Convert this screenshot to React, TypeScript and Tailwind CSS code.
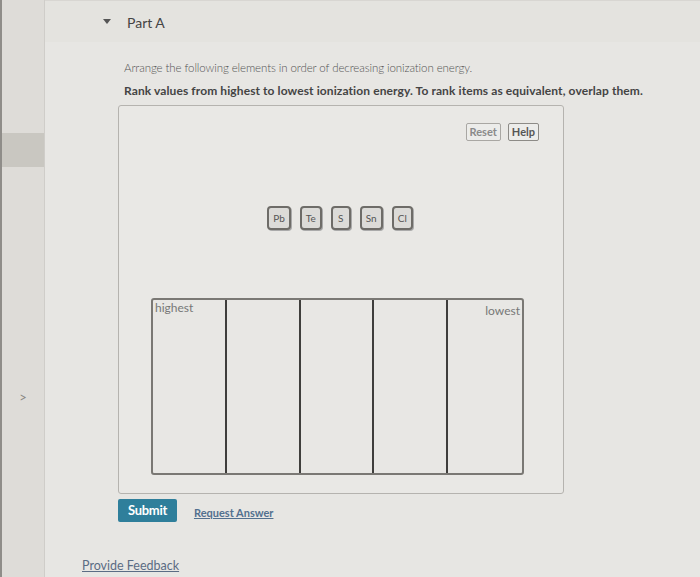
import React from "react";

const elements = ["Pb", "Te", "S", "Sn", "Cl"];

const App: React.FC = () => {
  return (
    <div
      className="flex h-[577px] w-[700px] overflow-hidden bg-[#e7e6e3] text-[#333]"
      style={{ fontFamily: "Lato, 'Open Sans', sans-serif" }}
    >
      {/* LEFT RAIL */}
      <aside className="flex w-[45px] shrink-0 flex-col border-r border-[#cfcdc9] bg-[#dedcd8] border-l-2 border-l-[#8f8d89]">
        <div className="h-[133px]" />
        <div className="h-[34px] bg-[#c9c7c1]" />
        <div className="flex flex-1 items-start justify-center pt-[221px] text-[13px] text-[#8a8883]">
          &gt;
        </div>
      </aside>

      {/* MAIN */}
      <main className="flex flex-1 flex-col">
        <header className="flex h-[42px] items-center gap-[16px] border-t border-[#d8d6d2] bg-[#e4e3df] pl-[58px] pt-[1px]">
          <svg width="8" height="6" viewBox="0 0 8 6" className="text-[#555]">
            <path d="M0 0 L8 0 L4 5 Z" fill="currentColor" />
          </svg>
          <span className="text-[14px] text-[#444]">Part A</span>
        </header>

        <section className="flex flex-col pl-[73px] pt-[17px]">
          <p className="pl-[6px] text-[11.5px] font-light tracking-[-0.1px] text-[#555]">
            Arrange the following elements in order of decreasing ionization energy.
          </p>
          <p className="mt-[6px] pl-[6px] text-[12px] font-bold tracking-[0.1px] text-[#444]">
            Rank values from highest to lowest ionization energy. To rank items as equivalent, overlap them.
          </p>

          {/* ITEM BOX */}
          <div className="mt-[5px] flex h-[389px] w-[446px] flex-col rounded-[3px] border border-[#b5b3af] bg-[#e9e8e5] px-[32px] pt-[17px]">
            <div className="mr-[-8px] flex justify-end gap-[7px]">
              <button className="rounded-[2px] border border-[#a9a7a3] bg-[#ececea] px-[3px] text-[11px] font-bold leading-[16px] text-[#8a8a8a]">
                Reset
              </button>
              <button className="rounded-[2px] border border-[#8d8b87] bg-[#ececea] px-[3px] text-[11px] font-bold leading-[16px] text-[#555]">
                Help
              </button>
            </div>

            <div className="mt-[65px] flex justify-center gap-[9px] pr-[2px]">
              {elements.map((el) => (
                <div
                  key={el}
                  className="flex h-[24px] min-w-[20px] items-center justify-center rounded-[4px] border-2 border-[#6e6c68] bg-[#dcdbd8] px-[4px] text-[10px] text-[#555] shadow-[1px_1px_0_#aaa]"
                >
                  {el}
                </div>
              ))}
            </div>

            {/* RANKING AREA */}
            <div className="mt-[68px] grid h-[177px] w-[373px] grid-cols-5 rounded-[3px] border-2 border-[#7a7874] bg-[#e8e7e4]">
              {["highest", "", "", "", "lowest"].map((label, i) => (
                <div
                  key={i}
                  className={`flex ${
                    i < 4 ? "border-r-2 border-[#3f3e3c]" : ""
                  } ${i === 4 ? "justify-end pt-[3px]" : "justify-start"}`}
                >
                  {label && (
                    <span className="px-[2px] text-[12px] leading-[15px] text-[#777]">{label}</span>
                  )}
                </div>
              ))}
            </div>
          </div>

          <div className="mt-[5px] flex items-center gap-[17px]">
            <button className="h-[23px] rounded-[2px] bg-[#2f7f9b] px-[10px] text-[13px] font-bold tracking-[-0.3px] text-white">
              Submit
            </button>
            <a className="mt-[4px] text-[11px] font-bold text-[#52708f] underline">Request Answer</a>
          </div>
        </section>

        <div className="mt-[30px] pl-[37px]">
          <a className="text-[12.5px] text-[#5b6c84] underline">Provide Feedback</a>
        </div>
      </main>
    </div>
  );
};

export default App;
